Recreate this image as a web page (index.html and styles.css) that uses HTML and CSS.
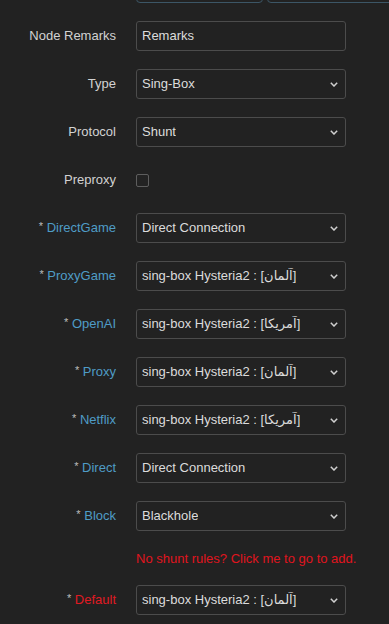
FILE: index.html
```html
<!DOCTYPE html>
<html>
<head>
<meta charset="utf-8">
<link rel="stylesheet" href="styles.css">
</head>
<body>
<div class="form">
  <div class="topbar">
    <div class="tb tb-a"></div>
    <div class="tb tb-b"></div>
  </div>

  <div class="row">
    <div class="label">Node Remarks</div>
    <div class="ctl input">Remarks</div>
  </div>

  <div class="row">
    <div class="label">Type</div>
    <div class="ctl select"><span class="val">Sing-Box</span><svg class="chev" width="8" height="5" viewBox="0 0 8 5"><path d="M0.8 0.8 L4 4 L7.2 0.8" fill="none" stroke="#d0d0d0" stroke-width="1.5"/></svg></div>
  </div>

  <div class="row">
    <div class="label">Protocol</div>
    <div class="ctl select"><span class="val">Shunt</span><svg class="chev" width="8" height="5" viewBox="0 0 8 5"><path d="M0.8 0.8 L4 4 L7.2 0.8" fill="none" stroke="#d0d0d0" stroke-width="1.5"/></svg></div>
  </div>

  <div class="row">
    <div class="label">Preproxy</div>
    <div class="cbwrap"><span class="checkbox"></span></div>
  </div>

  <div class="row">
    <div class="label blue"><span class="ast">*</span> DirectGame</div>
    <div class="ctl select"><span class="val">Direct Connection</span><svg class="chev" width="8" height="5" viewBox="0 0 8 5"><path d="M0.8 0.8 L4 4 L7.2 0.8" fill="none" stroke="#d0d0d0" stroke-width="1.5"/></svg></div>
  </div>

  <div class="row">
    <div class="label blue"><span class="ast">*</span> ProxyGame</div>
    <div class="ctl select"><span class="val">sing-box Hysteria2 : [آلمان]</span><svg class="chev" width="8" height="5" viewBox="0 0 8 5"><path d="M0.8 0.8 L4 4 L7.2 0.8" fill="none" stroke="#d0d0d0" stroke-width="1.5"/></svg></div>
  </div>

  <div class="row">
    <div class="label blue"><span class="ast">*</span> OpenAI</div>
    <div class="ctl select"><span class="val">sing-box Hysteria2 : [آمریکا]</span><svg class="chev" width="8" height="5" viewBox="0 0 8 5"><path d="M0.8 0.8 L4 4 L7.2 0.8" fill="none" stroke="#d0d0d0" stroke-width="1.5"/></svg></div>
  </div>

  <div class="row">
    <div class="label blue"><span class="ast">*</span> Proxy</div>
    <div class="ctl select"><span class="val">sing-box Hysteria2 : [آلمان]</span><svg class="chev" width="8" height="5" viewBox="0 0 8 5"><path d="M0.8 0.8 L4 4 L7.2 0.8" fill="none" stroke="#d0d0d0" stroke-width="1.5"/></svg></div>
  </div>

  <div class="row">
    <div class="label blue"><span class="ast">*</span> Netflix</div>
    <div class="ctl select"><span class="val">sing-box Hysteria2 : [آمریکا]</span><svg class="chev" width="8" height="5" viewBox="0 0 8 5"><path d="M0.8 0.8 L4 4 L7.2 0.8" fill="none" stroke="#d0d0d0" stroke-width="1.5"/></svg></div>
  </div>

  <div class="row">
    <div class="label blue"><span class="ast">*</span> Direct</div>
    <div class="ctl select"><span class="val">Direct Connection</span><svg class="chev" width="8" height="5" viewBox="0 0 8 5"><path d="M0.8 0.8 L4 4 L7.2 0.8" fill="none" stroke="#d0d0d0" stroke-width="1.5"/></svg></div>
  </div>

  <div class="row">
    <div class="label blue"><span class="ast">*</span> Block</div>
    <div class="ctl select"><span class="val">Blackhole</span><svg class="chev" width="8" height="5" viewBox="0 0 8 5"><path d="M0.8 0.8 L4 4 L7.2 0.8" fill="none" stroke="#d0d0d0" stroke-width="1.5"/></svg></div>
  </div>

  <div class="hintrow">
    <a class="hint">No shunt rules? Click me to go to add.</a>
  </div>

  <div class="row">
    <div class="label red"><span class="ast">*</span> Default</div>
    <div class="ctl select"><span class="val">sing-box Hysteria2 : [آلمان]</span><svg class="chev" width="8" height="5" viewBox="0 0 8 5"><path d="M0.8 0.8 L4 4 L7.2 0.8" fill="none" stroke="#d0d0d0" stroke-width="1.5"/></svg></div>
  </div>
</div>
</body>
</html>
```

FILE: styles.css
```css
html, body {
  margin: 0;
  padding: 0;
  background: #222222;
  overflow: hidden;
}

body {
  font-family: "Liberation Sans", Arial, "DejaVu Sans", sans-serif;
  font-size: 13px;
  color: #d6d6d6;
  width: 389px;
  height: 624px;
}

.form {
  display: flex;
  flex-direction: column;
  gap: 18px;
}

.topbar {
  display: flex;
  gap: 4px;
  margin-top: -27px;
  padding-left: 136px;
  height: 30px;
  overflow: hidden;
}

.tb {
  height: 28px;
  border: 1px solid #3c5666;
  border-radius: 4px;
  background: #222222;
  flex: none;
}

.tb-a {
  width: 125px;
}

.tb-b {
  width: 140px;
}

.row {
  display: flex;
  align-items: center;
  height: 30px;
}

.label {
  width: 136px;
  flex: none;
  text-align: right;
  padding-right: 20px;
  padding-bottom: 1px;
  box-sizing: border-box;
  color: #d2d2d2;
}

.label .ast {
  color: #bdbdbd;
  font-size: 11px;
  position: relative;
  top: -2px;
}

.label.blue {
  color: #4f9cc6;
}

.label.red {
  color: #e01a22;
}

.ctl {
  width: 210px;
  height: 30px;
  box-sizing: border-box;
  border: 1px solid #4c4c4c;
  border-radius: 3px;
  background: #222222;
  display: flex;
  align-items: center;
  padding: 0 5px 1px 5px;
  color: #dcdcdc;
  white-space: nowrap;
}

.select {
  justify-content: space-between;
  padding-right: 7px;
}

.select .val {
  overflow: hidden;
}

.chev {
  flex: none;
  margin-top: 1px;
}

.cbwrap {
  display: flex;
  align-items: center;
  height: 30px;
}

.checkbox {
  display: block;
  width: 13px;
  height: 13px;
  box-sizing: border-box;
  border: 1px solid #5e5e5e;
  border-radius: 2px;
  background: #232323;
}

.hintrow {
  height: 18px;
  display: flex;
  align-items: center;
  padding-left: 136px;
}

.hint {
  color: #e0141e;
  font-size: 13px;
  white-space: nowrap;
  cursor: pointer;
}
```
